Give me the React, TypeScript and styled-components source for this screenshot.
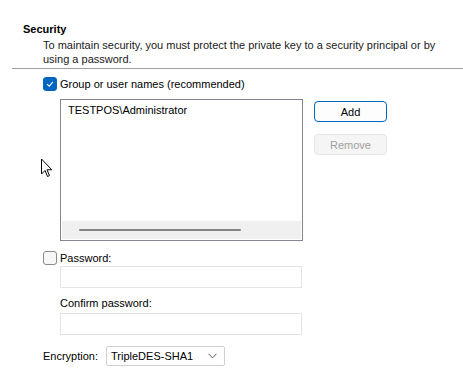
import React from "react";
import styled, { createGlobalStyle } from "styled-components";

const Global = createGlobalStyle`
  html, body { margin: 0; padding: 0; background: #ffffff; }
  body { font-family: "Segoe UI", "Liberation Sans", Arial, sans-serif; font-size: 11px; color: #000; }
`;

const Page = styled.div`
  width: 463px;
  height: 391px;
  position: relative;
  overflow: hidden;
  padding-top: 22px;
  box-sizing: border-box;
`;

const Heading = styled.div`
  font-weight: bold;
  margin-left: 23px;
  line-height: 14px;
`;

const Description = styled.div`
  margin: 2px 20px 0 43px;
  line-height: 14px;
  color: #1a1a1a;
`;

const Separator = styled.div`
  margin: 2px 0 0 12px;
  height: 1px;
  background: #a0a0a0;
`;

const Section = styled.div`
  padding-left: 43px;
  display: flex;
  flex-direction: column;
`;

const CheckRow = styled.label<{ $top: number }>`
  display: flex;
  align-items: center;
  gap: 3px;
  margin-top: ${(p) => p.$top}px;
  height: 14px;
`;

const Box = styled.span<{ $checked?: boolean }>`
  width: 14px;
  height: 14px;
  box-sizing: border-box;
  border-radius: 3px;
  display: flex;
  align-items: center;
  justify-content: center;
  background: ${(p) => (p.$checked ? "#0067c0" : "#f7f7f7")};
  border: 1px solid ${(p) => (p.$checked ? "#0067c0" : "#8a8a8a")};
`;

const Principals = styled.div`
  display: flex;
  gap: 11px;
  margin: 8px 0 0 17px;
`;

const ListBox = styled.div`
  width: 243px;
  height: 142px;
  box-sizing: border-box;
  border: 1px solid #828790;
  display: flex;
  flex-direction: column;
`;

const ListItems = styled.div`
  flex: 1;
  padding: 4px 0 0 7px;
`;

const ScrollBar = styled.div`
  height: 18px;
  margin: 0 0 1px 1px;
  width: 239px;
  background: #f0f0f0;
  display: flex;
  align-items: center;
  padding-left: 17px;
  box-sizing: border-box;
`;

const Thumb = styled.div`
  width: 162px;
  height: 2px;
  background: #858585;
  border-radius: 1px;
`;

const Buttons = styled.div`
  display: flex;
  flex-direction: column;
  gap: 12px;
  padding-top: 2px;
`;

const Button = styled.button<{ $primary?: boolean }>`
  width: 73px;
  height: 21px;
  box-sizing: border-box;
  border-radius: 4px;
  font: inherit;
  font-size: 11px;
  padding: 0;
  background: ${(p) => (p.$primary ? "#fdfdfd" : "#f5f5f5")};
  border: 1px solid ${(p) => (p.$primary ? "#0067c0" : "#e5e5e5")};
  color: ${(p) => (p.$primary ? "#000" : "#a0a0a0")};
`;

const Indented = styled.div`
  padding-left: 17px;
  display: flex;
  flex-direction: column;
`;

const Field = styled.div<{ $top: number }>`
  margin-top: ${(p) => p.$top}px;
  width: 242px;
  height: 22px;
  box-sizing: border-box;
  border: 1px solid #e3e3e3;
  background: #fff;
`;

const FieldLabel = styled.div`
  margin-top: 8px;
  line-height: 14px;
`;

const EncRow = styled.div`
  display: flex;
  align-items: center;
  margin-top: 11px;
`;

const EncLabel = styled.span`
  width: 63px;
`;

const Select = styled.div`
  width: 119px;
  height: 20px;
  box-sizing: border-box;
  border: 1px solid #d0d0d0;
  border-radius: 2px;
  display: flex;
  align-items: center;
  justify-content: space-between;
  padding: 0 7px 0 4px;
`;

const Cursor = styled.svg`
  position: absolute;
  left: 40px;
  top: 158px;
`;

export default function App() {
  return (
    <>
      <Global />
      <Page>
        <Heading>Security</Heading>
        <Description>
          To maintain security, you must protect the private key to a security principal or by using a password.
        </Description>
        <Separator />
        <Section>
          <CheckRow $top={8}>
            <Box $checked>
              <svg width="10" height="10" viewBox="0 0 10 10">
                <path d="M2 5.2 L4.2 7.2 L8 2.8" fill="none" stroke="#fff" strokeWidth="1.1" />
              </svg>
            </Box>
            <span>Group or user names (recommended)</span>
          </CheckRow>
          <Principals>
            <ListBox>
              <ListItems>TESTPOS\Administrator</ListItems>
              <ScrollBar>
                <Thumb />
              </ScrollBar>
            </ListBox>
            <Buttons>
              <Button $primary>Add</Button>
              <Button disabled>Remove</Button>
            </Buttons>
          </Principals>
          <CheckRow $top={10}>
            <Box />
            <span>Password:</span>
          </CheckRow>
          <Indented>
            <Field $top={1} />
            <FieldLabel>Confirm password:</FieldLabel>
            <Field $top={3} />
          </Indented>
          <EncRow>
            <EncLabel>Encryption:</EncLabel>
            <Select>
              <span>TripleDES-SHA1</span>
              <svg width="9" height="6" viewBox="0 0 9 6">
                <path d="M0.5 0.8 L4.5 4.8 L8.5 0.8" fill="none" stroke="#555" strokeWidth="1" />
              </svg>
            </Select>
          </EncRow>
        </Section>
        <Cursor width="13" height="20" viewBox="0 0 13 20">
          <path
            d="M1.5 1 L1.5 16 L5 12.5 L7.5 18.5 L9.5 17.6 L7 11.8 L11.8 11.8 Z"
            fill="#fff"
            stroke="#000"
            strokeWidth="1"
            strokeLinejoin="miter"
          />
        </Cursor>
      </Page>
    </>
  );
}
